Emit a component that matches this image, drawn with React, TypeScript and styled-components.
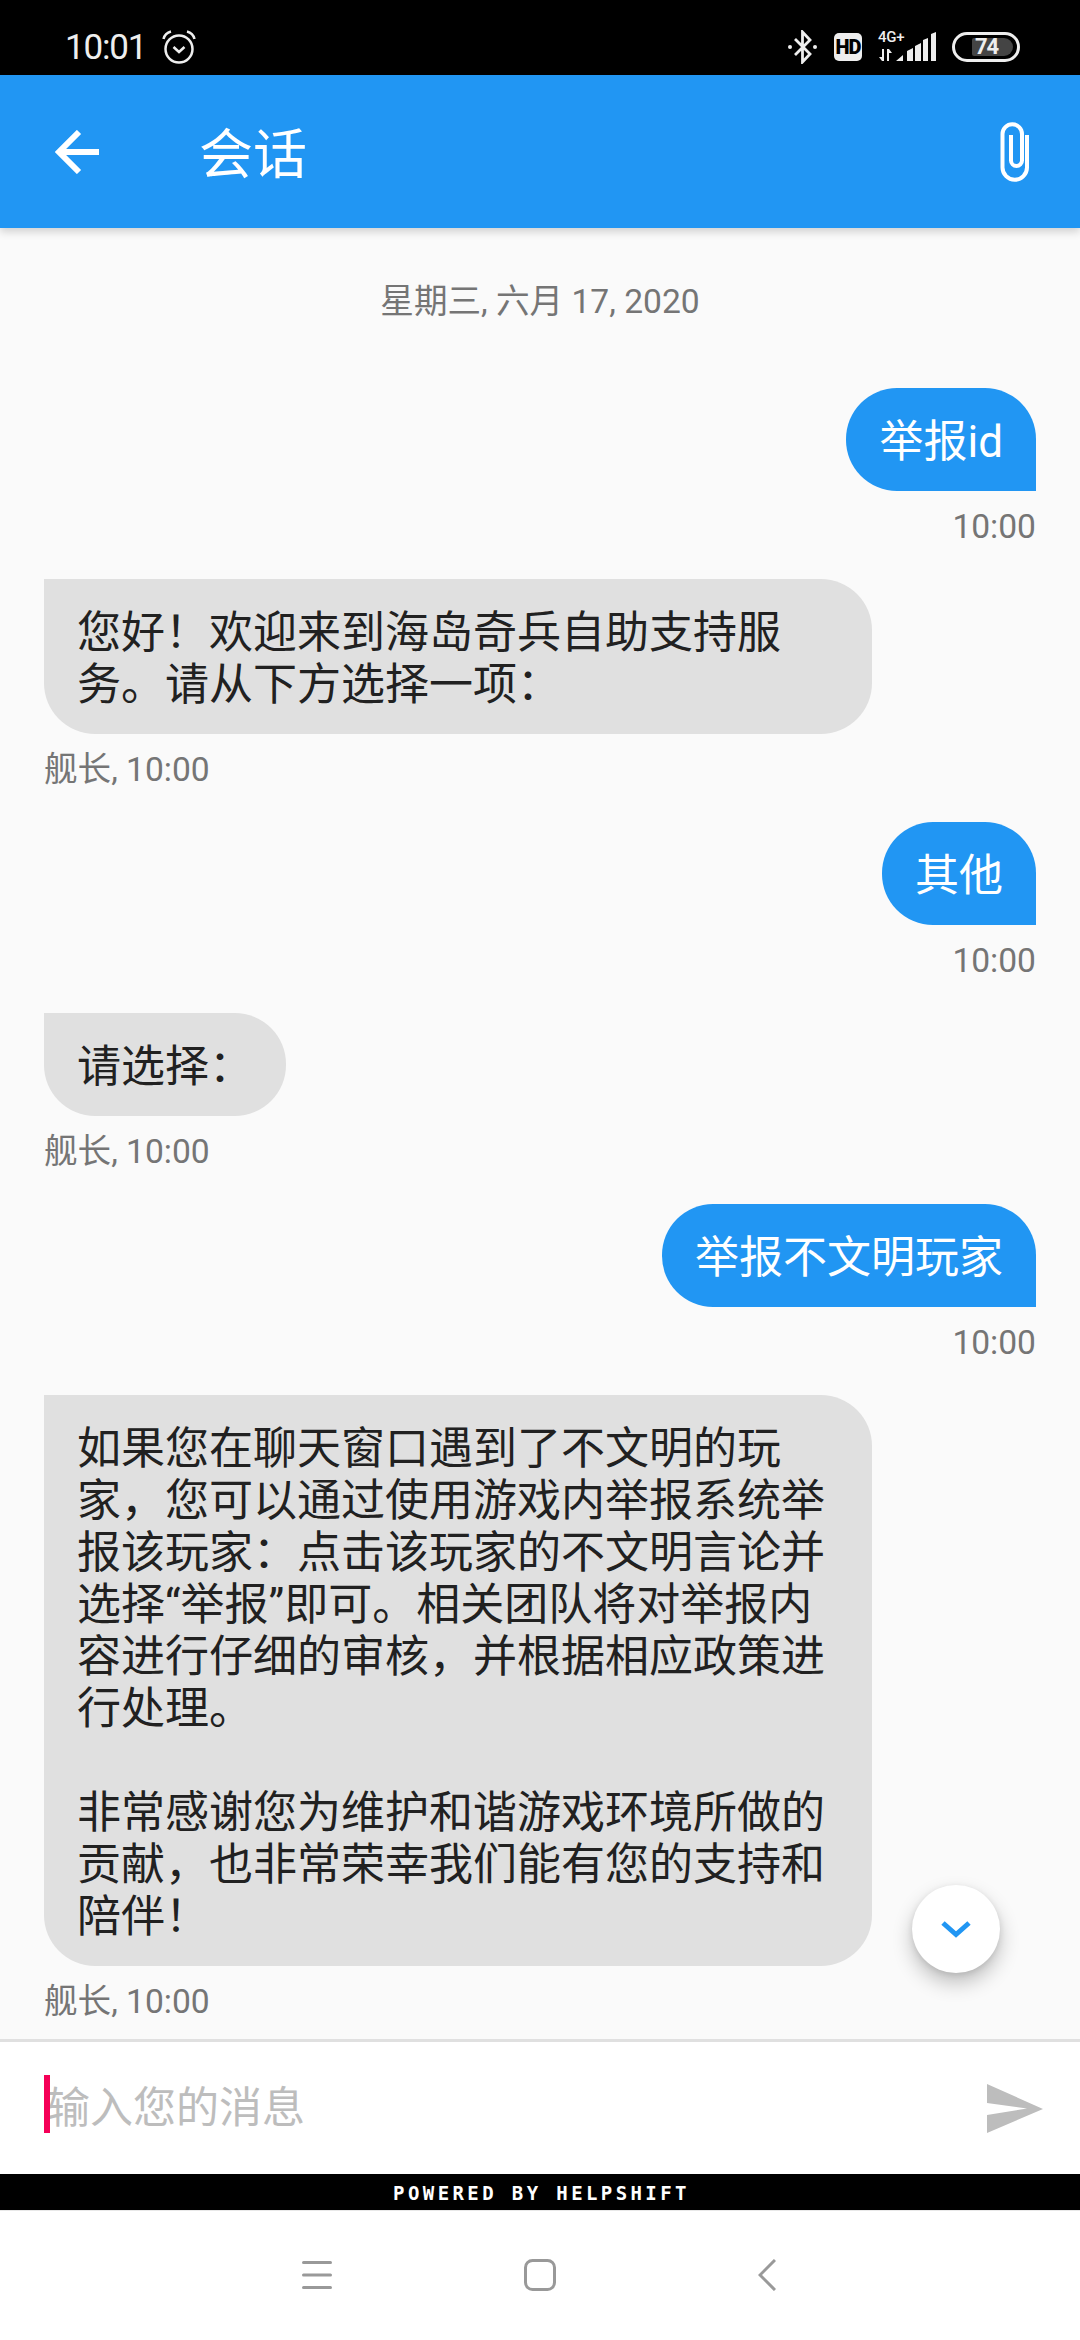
import React from "react";
import styled, { createGlobalStyle } from "styled-components";

const GlobalStyle = createGlobalStyle`
  html, body {
    margin: 0;
    padding: 0;
    background: #fff;
  }
  * {
    box-sizing: border-box;
  }
`;

const Screen = styled.div`
  width: 1080px;
  height: 2340px;
  display: flex;
  flex-direction: column;
  overflow: hidden;
  background: #fafafa;
  font-family: Roboto, "Noto Sans CJK SC", sans-serif;
`;

const StatusBar = styled.div`
  height: 75px;
  flex: none;
  background: #000;
  color: #eee;
  display: flex;
  align-items: center;
  justify-content: space-between;
  padding: 19px 60px 0 65px;
`;

const StatusGroup = styled.div`
  display: flex;
  align-items: center;
`;

const Clock = styled.span`
  font-size: 35px;
  font-weight: 400;
  letter-spacing: -1.2px;
  margin-right: 16px;
`;

const HdBadge = styled.span`
  width: 28px;
  height: 28px;
  margin: 0 16px 0 17px;
  border-radius: 5px;
  background: #eee;
  color: #000;
  font-size: 20px;
  font-weight: 900;
  letter-spacing: -1px;
  display: flex;
  align-items: center;
  justify-content: center;
`;

const SignalStack = styled.div`
  position: relative;
  width: 58px;
  height: 30px;
  margin-right: 16px;
`;

const NetworkLabel = styled.span`
  position: absolute;
  left: 0;
  top: -3px;
  font-size: 15px;
  line-height: 16px;
  font-weight: 500;
  letter-spacing: -0.2px;
`;

const Battery = styled.div`
  width: 68px;
  height: 30px;
  border: 3px solid #eee;
  border-radius: 15px;
  padding: 3px 4px 3px 17px;
  display: flex;
`;

const BatteryLevel = styled.div`
  flex: 1;
  border-radius: 2px 9px 9px 2px;
  background: #444;
  color: #eee;
  font-size: 22px;
  line-height: 18px;
  font-weight: 700;
  letter-spacing: -1px;
  padding-left: 3px;
`;

const AppBar = styled.header`
  height: 153px;
  flex: none;
  background: #2196f3;
  color: #fff;
  display: flex;
  align-items: center;
  padding: 0 49px 0 55px;
  box-shadow: 0 4px 8px rgba(0, 0, 0, 0.16);
  position: relative;
  z-index: 1;
`;

const Title = styled.h1`
  flex: 1;
  margin: 8px 0 0 98px;
  font-size: 54px;
  line-height: 60px;
  font-weight: 400;
`;

const Chat = styled.main`
  flex: 1;
  position: relative;
  overflow: hidden;
  padding: 55px 44px 0;
  display: flex;
  flex-direction: column;
`;

const DateLabel = styled.div`
  text-align: center;
  font-size: 33.6px;
  line-height: 38px;
  color: #757575;
  margin-bottom: 67px;
`;

const Message = styled.div<{ $mine?: boolean }>`
  display: flex;
  flex-direction: column;
  align-items: ${(p) => (p.$mine ? "flex-end" : "flex-start")};
  margin-bottom: 33px;
`;

const Bubble = styled.div<{ $mine?: boolean }>`
  max-width: 828px;
  padding: 28px 33px 23px;
  font-size: 44px;
  line-height: 52px;
  white-space: pre-wrap;
  color: ${(p) => (p.$mine ? "#fff" : "#212121")};
  background: ${(p) => (p.$mine ? "#2196f3" : "#e0e0e0")};
  border-radius: ${(p) => (p.$mine ? "51px 51px 0 51px" : "0 51px 51px 51px")};
`;

const Meta = styled.div`
  margin-top: 17px;
  font-size: 33.6px;
  line-height: 38px;
  color: #757575;
`;

const ScrollButton = styled.div`
  position: absolute;
  left: 912px;
  top: 1657px;
  width: 88px;
  height: 88px;
  border-radius: 50%;
  background: #fff;
  box-shadow: 0 10px 20px rgba(0, 0, 0, 0.24), 0 2px 6px rgba(0, 0, 0, 0.1);
  display: flex;
  align-items: center;
  justify-content: center;
`;

const Composer = styled.div`
  height: 135px;
  flex: none;
  background: #fff;
  border-top: 3px solid #e0e0e0;
  display: flex;
  align-items: center;
  padding: 0 37px 0 44px;
`;

const Caret = styled.span`
  width: 6px;
  height: 58px;
  flex: none;
  background: #f50057;
  margin-bottom: 8px;
  position: relative;
  z-index: 1;
`;

const Placeholder = styled.span`
  flex: 1;
  margin-left: -3px;
  font-size: 43px;
  line-height: 52px;
  color: #bdbdbd;
`;

const PoweredBy = styled.div`
  height: 36px;
  flex: none;
  overflow: hidden;
  background: #000;
  color: #fff;
  font-family: "DejaVu Sans Mono", monospace;
  font-size: 19px;
  font-weight: 700;
  line-height: 39px;
  letter-spacing: 3.4px;
  text-align: center;
  padding-left: 3px;
`;

const NavBar = styled.nav`
  height: 130px;
  flex: none;
  background: #fff;
  box-shadow: inset 0 1px 0 #e8e8e8;
  display: flex;
  align-items: center;
  justify-content: center;
  padding-right: 2px;
`;

const NavSpacer = styled.span<{ $width: number }>`
  width: ${(p) => p.$width}px;
`;

const App: React.FC = () => {
  return (
    <Screen>
      <GlobalStyle />
      <StatusBar>
        <StatusGroup>
          <Clock>10:01</Clock>
          <svg width="34" height="34" viewBox="0 0 34 34" fill="none" stroke="#eee" strokeWidth="2.5">
            <circle cx="17" cy="19" r="13.500" />
            <path d="M11.500 17l5.500 5 5.500-5" />
            <path d="M1.500 9Q3 3 9 1.500M32.500 9Q31 3 25 1.500" />
          </svg>
        </StatusGroup>
        <StatusGroup>
          <svg width="29" height="34" viewBox="0 0 29 34" fill="none" stroke="#eee" strokeWidth="2.800">
            <path d="M7 9l15 15-7.500 8V2L22 10 7 25" />
            <circle cx="2" cy="17" r="2" fill="#eee" stroke="none" />
            <circle cx="27" cy="17" r="2" fill="#eee" stroke="none" />
          </svg>
          <HdBadge>HD</HdBadge>
          <SignalStack>
            <NetworkLabel>4G+</NetworkLabel>
            <svg width="58" height="30" viewBox="0 0 58 30" fill="#eee">
              <path d="M4 17h2v12H4L1 25h3zM9 17v12h2v-8h3l-3-4z" />
              <path d="M18 29l7-6v6zM29 29V19l6-3v13zM37 29V14l6-3v18zM45 29V8l5-2v23zM53 29V2l5-2v29z" />
            </svg>
          </SignalStack>
          <Battery>
            <BatteryLevel>74</BatteryLevel>
          </Battery>
        </StatusGroup>
      </StatusBar>

      <AppBar>
        <svg width="46" height="44" viewBox="0 0 46 44" fill="none" stroke="#fff" strokeWidth="6">
          <path d="M44 22H5M24 2L4 22l20 20" />
        </svg>
        <Title>会话</Title>
        <svg width="32" height="60" viewBox="0 0 32 60" fill="none" stroke="#fff" strokeWidth="4">
          <path d="M12 13v25.500a5.500 5.500 0 0 0 11 0V12a9.750 9.750 0 0 0-19.500 0v33.500a12.250 12.250 0 0 0 24.500 0V13" />
        </svg>
      </AppBar>

      <Chat>
        <DateLabel>星期三, 六月 17, 2020</DateLabel>
        <Message $mine>
          <Bubble $mine>举报id</Bubble>
          <Meta>10:00</Meta>
        </Message>
        <Message>
          <Bubble>您好！欢迎来到海岛奇兵自助支持服务。请从下方选择一项：</Bubble>
          <Meta>舰长, 10:00</Meta>
        </Message>
        <Message $mine>
          <Bubble $mine>其他</Bubble>
          <Meta>10:00</Meta>
        </Message>
        <Message>
          <Bubble>请选择：</Bubble>
          <Meta>舰长, 10:00</Meta>
        </Message>
        <Message $mine>
          <Bubble $mine>举报不文明玩家</Bubble>
          <Meta>10:00</Meta>
        </Message>
        <Message>
          <Bubble>
            {"如果您在聊天窗口遇到了不文明的玩家，您可以通过使用游戏内举报系统举报该玩家：点击该玩家的不文明言论并选择“举报”即可。相关团队将对举报内容进行仔细的审核，并根据相应政策进行处理。\n\n非常感谢您为维护和谐游戏环境所做的贡献，也非常荣幸我们能有您的支持和陪伴！"}
          </Bubble>
          <Meta>舰长, 10:00</Meta>
        </Message>
        <ScrollButton>
          <svg width="32" height="18" viewBox="0 0 32 18" fill="none" stroke="#2196f3" strokeWidth="5">
            <path d="M3 3l13 11.500L29 3" />
          </svg>
        </ScrollButton>
      </Chat>

      <Composer>
        <Caret />
        <Placeholder>输入您的消息</Placeholder>
        <svg width="56" height="49" viewBox="0 0 56 49" fill="#bdbdbd">
          <path d="M0 0l56 25L0 49V31l40-6.500L0 19z" />
        </svg>
      </Composer>

      <PoweredBy>POWERED BY HELPSHIFT</PoweredBy>

      <NavBar>
        <svg width="30" height="28" viewBox="0 0 30 28" fill="#999">
          <rect y="0" width="30" height="3" rx="1.500" />
          <rect y="12.500" width="30" height="3" rx="1.500" />
          <rect y="25" width="30" height="3" rx="1.500" />
        </svg>
        <NavSpacer $width={192} />
        <svg width="32" height="32" viewBox="0 0 32 32" fill="none" stroke="#999" strokeWidth="3">
          <rect x="1.500" y="1.500" width="29" height="29" rx="7" />
        </svg>
        <NavSpacer $width={202} />
        <svg width="18" height="32" viewBox="0 0 18 32" fill="none" stroke="#999" strokeWidth="3">
          <path d="M17 1L2 16l15 15" />
        </svg>
      </NavBar>
    </Screen>
  );
};

export default App;
